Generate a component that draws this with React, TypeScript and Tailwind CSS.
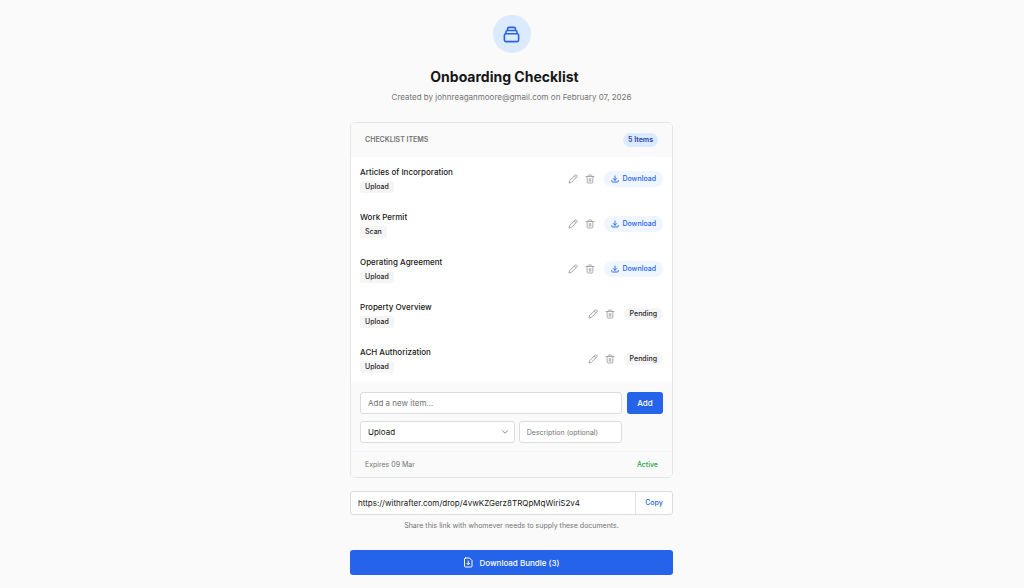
import React, { useState } from "react";
import { HiOutlineChevronDown } from "react-icons/hi2";
import { HiOutlineCollection } from "react-icons/hi";

interface ChecklistItem {
  id: number;
  name: string;
  type: "Upload" | "Scan";
  ready: boolean;
}

const items: ChecklistItem[] = [
  { id: 1, name: "Articles of Incorporation", type: "Upload", ready: true },
  { id: 2, name: "Work Permit", type: "Scan", ready: true },
  { id: 3, name: "Operating Agreement", type: "Upload", ready: true },
  { id: 4, name: "Property Overview", type: "Upload", ready: false },
  { id: 5, name: "ACH Authorization", type: "Upload", ready: false },
];

const shareUrl = "https://withrafter.com/drop/4vwKZGerz8TRQpMqWiriS2v4";

const PencilIcon = () => (
  <svg viewBox="0 0 20 20" fill="none" stroke="currentColor" strokeWidth="2" strokeLinejoin="round" className="size-[10px]">
    <path d="M2 18l1-4.500L14.500 2a1.800 1.800 0 0 1 2.500 0l1 1a1.800 1.800 0 0 1 0 2.500L6.500 17 2 18zM12.500 4l3.500 3.500" />
  </svg>
);

const TrashIcon = () => (
  <svg viewBox="0 0 20 20" fill="none" stroke="currentColor" strokeWidth="1.8" strokeLinecap="round" className="size-[10px]">
    <path d="M2 5h16M6.500 5V3.500A1.500 1.500 0 0 1 8 2h4a1.500 1.500 0 0 1 1.500 1.500V5M4 5l.5 11.500A1.600 1.600 0 0 0 6.100 18h7.800a1.600 1.600 0 0 0 1.600-1.500L16 5M8.500 9v5.500M11.500 9v5.500" />
  </svg>
);

const DownloadIcon = () => (
  <svg viewBox="0 0 16 16" fill="none" stroke="currentColor" strokeWidth="1.8" strokeLinecap="round" strokeLinejoin="round" className="size-2">
    <path d="M8 2v8.500M4.500 7L8 10.500 11.500 7M1.500 11v1.500A1.500 1.500 0 0 0 3 14h10a1.500 1.500 0 0 0 1.500-1.500V11" />
  </svg>
);

const BundleIcon = () => (
  <svg viewBox="0 0 22 22" fill="none" stroke="currentColor" strokeWidth="2" strokeLinecap="round" strokeLinejoin="round" className="size-[11px]">
    <path d="M5 2h8l5 5v11a2 2 0 0 1-2 2H5a2 2 0 0 1-2-2V4a2 2 0 0 1 2-2zM10.500 8v7M7.500 12.500l3 3 3-3" />
  </svg>
);

const ItemRow: React.FC<{ item: ChecklistItem }> = ({ item }) => (
  <li className="flex h-[45px] items-center justify-between px-[9px] pb-[2px]">
    <div>
      <p className="text-[8px] leading-[14px] font-medium text-neutral-900">{item.name}</p>
      <span className="mt-[2px] block w-fit rounded-[3px] bg-neutral-100 px-[5px] text-[7px] leading-3 font-medium text-neutral-800">
        {item.type}
      </span>
    </div>
    <div className="flex items-center">
      <button type="button" aria-label={`Edit ${item.name}`} className="text-neutral-400">
        <PencilIcon />
      </button>
      <button type="button" aria-label={`Delete ${item.name}`} className="ml-[7px] text-neutral-400">
        <TrashIcon />
      </button>
      {item.ready ? (
        <button
          type="button"
          className="ml-[9px] flex items-center gap-[3px] rounded-full bg-[#eff6ff] px-[7px] text-[7px] leading-4 font-medium text-[#2563eb]"
        >
          <DownloadIcon />
          Download
        </button>
      ) : (
        <span className="ml-[9px] rounded-full bg-neutral-100 px-[6px] text-[7px] leading-3 font-medium text-neutral-800">
          Pending
        </span>
      )}
    </div>
  </li>
);

const App: React.FC = () => {
  const [name, setName] = useState("");
  const [type, setType] = useState("Upload");
  const [description, setDescription] = useState("");

  return (
    <div className="min-h-screen bg-[#fafafa] pt-[15px] pr-[17px] pb-[13px] pl-4 font-['Inter',sans-serif] text-neutral-900">
      <main className="mx-auto w-full max-w-[323px]">
        {/* Heading */}
        <header className="flex flex-col items-center">
          <div className="flex size-[38px] items-center justify-center rounded-full bg-[#dbeafe] text-[#2563eb]">
            <HiOutlineCollection className="size-[19px]" />
          </div>
          <h1 className="mt-[14px] pr-[14px] text-[14px] leading-5 font-bold">Onboarding Checklist</h1>
          <p className="mt-[3px] text-[8px] leading-[14px] text-neutral-500">
            Created by johnreaganmoore@gmail.com on February 07, 2026
          </p>
        </header>

        {/* Checklist */}
        <section className="mt-[18px] overflow-hidden rounded-[5px] border border-neutral-200 bg-white">
          <div className="flex h-[34px] items-center justify-between bg-[#fafafa] px-[14px]">
            <h2 className="text-[7px] font-semibold text-neutral-500 uppercase">Checklist Items</h2>
            <span className="rounded-full bg-[#dbeafe] px-[5px] text-[7px] leading-[14px] font-semibold text-[#1e40af]">
              {items.length} Items
            </span>
          </div>
          <ul>
            {items.map((item) => (
              <ItemRow key={item.id} item={item} />
            ))}
          </ul>

          {/* Add form */}
          <form
            onSubmit={(e) => e.preventDefault()}
            className="grid grid-cols-[1fr_36px] gap-x-[5px] gap-y-[7px] bg-[#fafafa] px-[9px] pt-[10px] pb-2"
          >
            <input
              type="text"
              aria-label="Item name"
              placeholder="Add a new item..."
              value={name}
              onChange={(e) => setName(e.target.value)}
              className="h-[22px] min-w-0 rounded-[3px] border border-[#dcdcdc] bg-white px-[7px] text-[8px] placeholder:text-neutral-500"
            />
            <button type="submit" className="h-[22px] rounded-[3px] bg-[#2563eb] text-[8px] font-medium text-white">
              Add
            </button>
            <div className="grid grid-cols-[3fr_2fr] gap-1">
              <div className="relative">
                <select
                  aria-label="Item type"
                  value={type}
                  onChange={(e) => setType(e.target.value)}
                  className="block h-[22px] w-full appearance-none rounded-[3px] border border-[#dcdcdc] bg-white px-[7px] text-[8px]"
                >
                  <option>Upload</option>
                  <option>Scan</option>
                </select>
                <HiOutlineChevronDown
                  className="pointer-events-none absolute top-[7px] right-[6px] size-2 text-neutral-500"
                  strokeWidth={2.5}
                />
              </div>
              <input
                type="text"
                aria-label="Description"
                placeholder="Description (optional)"
                value={description}
                onChange={(e) => setDescription(e.target.value)}
                className="h-[22px] min-w-0 rounded-[3px] border border-[#dcdcdc] bg-white px-[7px] text-[7px] placeholder:text-neutral-500"
              />
            </div>
          </form>

          <div className="flex h-[26px] items-center justify-between border-t border-neutral-100 bg-[#fafafa] px-[14px] pt-px text-[7px]">
            <span className="text-neutral-500">Expires 09 Mar</span>
            <span className="font-medium text-[#16a34a]">Active</span>
          </div>
        </section>

        {/* Share link */}
        <div className="mt-[13px] flex h-6 overflow-hidden rounded-[3px] border border-[#dcdcdc] bg-white">
          <input
            type="text"
            readOnly
            aria-label="Share link"
            value={shareUrl}
            className="min-w-0 flex-1 px-[7px] text-[8px]"
          />
          <button type="button" className="w-[37px] border-l border-neutral-200 text-[7px] font-medium text-[#2563eb]">
            Copy
          </button>
        </div>
        <p className="mt-[5px] text-center text-[7px] leading-3 text-neutral-500">
          Share this link with whomever needs to supply these documents.
        </p>

        <button
          type="button"
          className="mt-[18px] flex h-[25px] w-full items-center justify-center gap-[5px] rounded-[3px] bg-[#2563eb] text-[8px] font-medium text-white"
        >
          <BundleIcon />
          Download Bundle (3)
        </button>
      </main>
    </div>
  );
};

export default App;
